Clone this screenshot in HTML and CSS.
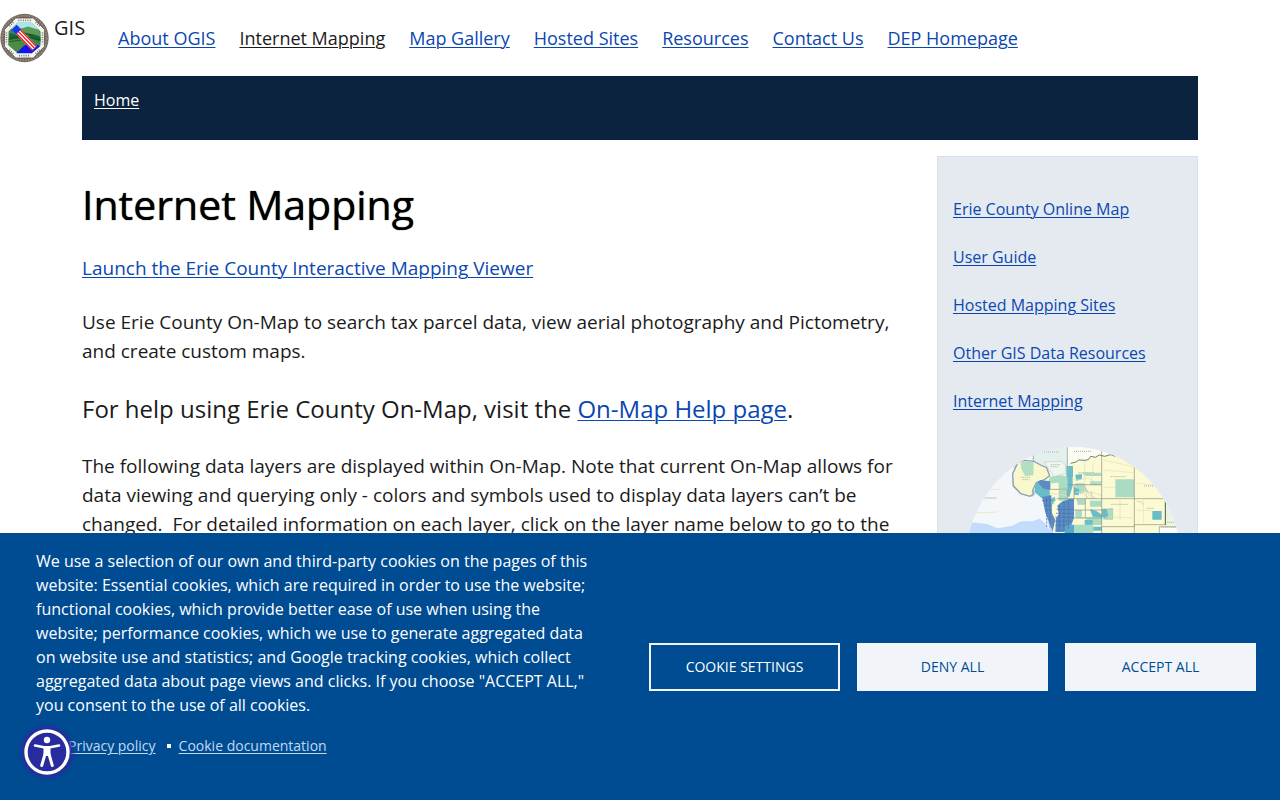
FILE: index.html
```html
<!DOCTYPE html>
<html lang="en">
<head>
<meta charset="utf-8">
<meta name="viewport" content="width=device-width, initial-scale=1">
<title>Internet Mapping | GIS</title>
<link rel="stylesheet" href="styles.css">
</head>
<body>
<header class="site-header">
  <a class="brand" href="#">
    <svg class="seal" viewBox="0 0 150 150" aria-hidden="true">
      <circle cx="75" cy="75" r="74" fill="#756960"/>
      <circle cx="75" cy="75" r="68" fill="none" stroke="#94887d" stroke-width="6" stroke-dasharray="5 4"/>
      <path d="M48 14h54l34 35v52l-34 35H48l-34-35V49z" fill="#f4f4f0" stroke="#4d453f" stroke-width="2"/>
      <path d="M53 28h44l27 27v42l-27 24H53L26 97V55z" fill="#368a45"/>
      <path d="M53 28h44l22 22-27 3-18-7-40 2z" fill="#a7e6ee"/>
      <path d="M60 48l25-8 34 10 5 18-30-2z" fill="#5c9a55"/>
      <path d="M30 60l22 6 8 12-34 4z" fill="#1e6337"/>
      <path d="M80 60l25 4 19 8v14l-24-8z" fill="#1e6337"/>
      <path d="M26 82l25-4 27 13-20 24h-10L26 97z" fill="#4b8c45"/>
      <path d="M50 122l20-20 23-14 30 12-26 22z" fill="#1115e8"/>
      <path d="M28 86l35-4M74 60l25 8M86 72l37 8M30 76l28-6" fill="none" stroke="#103c20" stroke-width="2"/>
      <g transform="rotate(46 77 77)">
        <path d="M30 67h88v20H30z" fill="#fff"/>
        <path d="M30 67h88v4H30zm0 8h88v4H30zm0 8h88v4H30z" fill="#ee1820"/>
        <path d="M28 66h20v22H28z" fill="#123bea"/>
      </g>
      <path d="M56 21h38M20 58v36M130 58v36M58 129h34M29 39l13-13M121 39l-13-13M29 111l13 13M121 111l-13 13" fill="none" stroke="#77736f" stroke-width="5" stroke-dasharray="3 4"/>
    </svg>
    <span>GIS</span>
  </a>
  <nav class="main-nav" aria-label="Main">
    <a href="#">About OGIS</a>
    <a class="active" href="#">Internet Mapping</a>
    <a href="#">Map Gallery</a>
    <a href="#">Hosted Sites</a>
    <a href="#">Resources</a>
    <a href="#">Contact Us</a>
    <a href="#">DEP Homepage</a>
  </nav>
</header>
<div class="container">
  <nav class="breadcrumb" aria-label="Breadcrumb"><a href="#">Home</a></nav>
  <div class="columns">
    <main class="content">
      <h1>Internet Mapping</h1>
      <p><a href="#">Launch the Erie County Interactive Mapping Viewer</a></p>
      <p>Use Erie County On-Map to search tax parcel data, view aerial photography and Pictometry, and create custom maps.</p>
      <p class="help">For help using Erie County On-Map, visit the <a href="#">On-Map Help page</a>.</p>
      <p>The following data layers are displayed within On-Map. Note that current On-Map allows for data viewing and querying only - colors and symbols used to display data layers can’t be changed.&nbsp; For detailed information on each layer, click on the layer name below to go to the</p>
    </main>
    <aside class="sidebar">
      <ul>
        <li><a href="#">Erie County Online Map</a></li>
        <li><a href="#">User Guide</a></li>
        <li><a href="#">Hosted Mapping Sites</a></li>
        <li><a href="#">Other GIS Data Resources</a></li>
        <li><a href="#">Internet Mapping</a></li>
      </ul>
      <div class="map-frame">
      <svg class="county-map" viewBox="45 51 651 705" role="img" aria-label="Erie County map">
        <path d="M9 51h687v870H9z" fill="#f4f7fa"/>
        <!-- lake -->
        <path d="M9 278l70 0 34 5 30 12 44-8 26-13 34 0 22-8 14 12 30 40v603H9z" fill="#c2dcfb"/>
        <!-- northern towns -->
        <path d="M250 51h102v60l-50 10-52-32z" fill="#e2f1ee"/>
        <path d="M352 51h160v28l-60 0-40 10-58 16z" fill="#fbfcf2"/>
        <!-- river -->
        <path d="M190 105l14 6-12 30 2 28 22 18 30 6 18-16 24 40 12 60 10 40 30 40" fill="none" stroke="#c7d9f2" stroke-width="12"/>
        <!-- mainland -->
        <path d="M300 138l48-4 3-25 22-12 32-2 22-14 68-3 70 20 131 100v723H310V300l-27-85-29-30 4-26z" fill="#fbfad2"/>
        <!-- island -->
        <path d="M204 97l20-6 28 3 20 11 18 8 9 24-16 12-24 9-11 23 2 12-10 6-28-8-22-24-2-36z" fill="#f8f8cc" stroke="#8c9db4" stroke-width="4"/>
        <path d="M212 98l24-6 15 6-1 38-25 2-12-24z" fill="#b2dec4"/>
        <path d="M282 96l52-2 12 10 2 26-34 10-14-18z" fill="#eef6ee" stroke="#c2ccc8" stroke-width="2"/>
        <!-- pale green tracts -->
        <path d="M300 140l32-4 20 4v38h-54l-4-20zM496 148h57v54h-57zM396 128l58 0v10h-50zM420 154h34v12h-34zM376 160l28 0 8 22-20 10-18-6zM326 180h26v32h-26zM380 206h26v18h-26zM376 240h30v24h-30zM420 212h35v18h-35zM408 262l48-2v24l-46 2zM372 284h58v36h-58zM458 240l30-6v34h-30z" fill="#aadcc3"/>
        <!-- teal tracts -->
        <path d="M349 108h20v34h-20zM352 142h16v26l-10 34-6-4zM376 134l20-2v16l-18 4zM256 158l14-6 20 8 10 26-2 16-24 2-20-18zM372 172l16 6-2 18-14-2zM420 238l18 4 18 12v8l-28-2zM404 270h24v14h-24zM607 243h28v26h-28zM430 290h26v12h-26zM456 236l14 0 6 26-20 0zM302 208l12-8 4 16-10 8z" fill="#6bbcc9"/>
        <!-- blue tracts -->
        <path d="M262 156l10-6 28 4v26l-20-4zM276 200l28-4 2 54 10 20-8 34-22-56zM322 226l16-12 22-8 12 0v58l-10 26-20 16-26 0 2-40 8-14z" fill="#5b8cc2"/>
        <path d="M344 284h28v30h-28z" fill="#5da7c9"/>
        <path d="M290 204v90M300 196v100M318 250h54M316 262h54M316 274h46M316 286h40M328 226v80M342 216v90M356 208v90M276 212h28M282 226h24M286 240h20M320 238h52" fill="none" stroke="#4168ac" stroke-width="2" stroke-dasharray="7 3"/>
        <!-- cream infill -->
        <path d="M304 160l22-2v20h-24zM372 214h10v12h18v14h-24zM310 216l14-8 4 14-14 10zM396 238h22v24h-22z" fill="#fdfbd9"/>
        <path d="M628 290h50v30h-50z" fill="#fcfcf8"/>
        <path d="M648 202l34 50v34h-34z" fill="#e9f3e4"/>
        <!-- streets -->
        <path d="M372 150l40-6 42 18M376 188l40-4 38 12M400 210l20-16 20 12M460 120l90 8M460 172h36M470 260l80 4M560 160l60 6M560 240l44 2M404 90v110M430 100l-6 60M300 190l50 6M460 90l90 20M510 210v60M580 210v70M50 204h90M50 250l90-4M90 180l60-2" fill="none" stroke="#e2dfbd" stroke-width="2"/>
        <path d="M412 182l6 10 8-6-2 14 8 4-14 2-10-6zM462 238l26-2v32h-24zM560 214l14 2 8 8" fill="none" stroke="#8a9a90" stroke-width="1"/>
        <!-- boundaries -->
        <path d="M455 60v260M553 100v220M372 206h278M455 290h98l0-6h96M320 206h52M250 72v22M352 51v58M628 290v30M628 290h52M372 164v42M300 178h52v28M372 240h84M372 264h84M406 206v60M352 164h102" fill="none" stroke="#8d9281" stroke-width="2"/>
        <path d="M646 208v76" stroke="#4c5650" stroke-width="3"/>
        <path d="M362 100l16-4 8-6 20 1 10-3 6-9 14 3 12-7 16 4 18-5 14 5" fill="none" stroke="#747c70" stroke-width="3"/>
        <path d="M276 66h54M372 64h54M302 104h28M302 110h24M214 142h26M218 149h20M386 128h46M482 140h44M484 223h50M582 168h36M590 235h24M106 204h36M652 277h26M634 292h44" stroke="#a7aea5" stroke-width="3" stroke-dasharray="3 3"/>
      </svg>
      </div>
    </aside>
  </div>
</div>
<section class="cookies" aria-label="Cookie consent">
  <div class="cookie-text">
    <p>We use a selection of our own and third-party cookies on the pages of this website: Essential cookies, which are required in order to use the website; functional cookies, which provide better ease of use when using the website; performance cookies, which we use to generate aggregated data on website use and statistics; and Google tracking cookies, which collect aggregated data about page views and clicks. If you choose "ACCEPT ALL," you consent to the use of all cookies.</p>
    <ul class="cookie-links">
      <li><a href="#">Privacy policy</a></li>
      <li><a href="#">Cookie documentation</a></li>
    </ul>
  </div>
  <div class="cookie-actions">
    <button class="outline" type="button">COOKIE SETTINGS</button>
    <button type="button">DENY ALL</button>
    <button type="button">ACCEPT ALL</button>
  </div>
</section>
<button class="accessibility" type="button" aria-label="Accessibility options">
  <svg viewBox="0 0 46 46" aria-hidden="true">
    <circle cx="23" cy="23" r="21" fill="#272b9e" stroke="#fff" stroke-width="3.4"/>
    <circle cx="23" cy="11" r="3.2" fill="#fff"/>
    <path d="M11 16.5l9 1.7h6l9-1.7" fill="none" stroke="#fff" stroke-width="2.6" stroke-linecap="round" stroke-linejoin="round"/>
    <path d="M19.5 17h7v10h-7z" fill="#fff"/>
    <path d="M20.9 25.5l-3.2 11M25.1 25.5l3.2 11" stroke="#fff" stroke-width="3" stroke-linecap="round"/>
  </svg>
</button>
</body>
</html>
```

FILE: styles.css
```css
* { box-sizing: border-box; }
body { margin: 0; font: 16px/24px "Open Sans", "Noto Sans", sans-serif; color: #1b1b1b; background: #fff; }
a { color: #0b47b0; text-underline-offset: 2px; text-decoration-thickness: 1px; }
p, ul { margin: 0; padding: 0; list-style: none; }
.site-header { display: flex; align-items: center; min-height: 76px; font-size: 18px; }
.brand { display: flex; gap: 5px; font-size: 20px; line-height: 30px; color: #1b1b1b; text-decoration: none; }
.seal { width: 49px; height: 50px; }
.main-nav { display: flex; flex-wrap: wrap; gap: 24px; margin-left: 33px; }
.main-nav .active { color: #1b1b1b; }
.container { max-width: 1140px; margin: 0 auto; padding: 0 12px; }
.breadcrumb { padding: 12px 12px 28px; background: #0c233f; }
.breadcrumb a { color: #fff; }
.columns { display: grid; grid-template-columns: minmax(0, 1fr) calc(25% - 18px); gap: 24px; margin-top: 16px; }
.content { padding-top: 25px; font-size: 19px; line-height: 29px; }
h1 { margin: 0 0 27px; font-size: 41px; line-height: 46px; font-weight: 500; color: #000; text-shadow: 0 0 1px #000; }
.content p { margin-top: 25px; }
.content .help { font-size: 24px; line-height: 36px; }
.sidebar { padding: 40px 15px; background: #e5eaf1; border: 1px solid #d6e1ed; }
.sidebar li { margin-bottom: 24px; }
.sidebar li:last-child { margin-bottom: 0; }
.map-frame { padding: 34px 0 0 12px; }
.county-map { display: block; width: 100%; border-radius: 50%; }
.cookies { position: fixed; left: 0; right: 0; bottom: 0; display: flex; align-items: center; gap: 24px; padding: 0 24px 0 36px; background: #004c93; color: #fff; }
.cookie-text { flex: 1; padding: 16px 0 42px; }
.cookie-text p { max-width: 556px; }
.cookie-links { display: flex; margin: 17px 0 0 32px; font-size: 14px; }
.cookie-links li + li { display: flex; align-items: center; }
.cookie-links li + li::before { content: ""; width: 4px; height: 4px; margin: 0 8px 0 11px; background: #fff; }
.cookie-links a { color: #c0d9f2; }
.cookie-actions { display: flex; gap: 17px; }
.cookie-actions button { width: 191px; height: 48px; border: 2px solid #f1f5fa; background: #f1f5fa; color: #004c93; font: 14px "Open Sans", sans-serif; }
.cookie-actions .outline { background: transparent; color: #fff; }
.accessibility { position: fixed; left: 24px; bottom: 25px; width: 46px; height: 46px; padding: 0; border: 0; border-radius: 50%; background: #272b9e; box-shadow: 0 0 4px 3px #272b9e; }
.accessibility svg { display: block; width: 100%; }
```
